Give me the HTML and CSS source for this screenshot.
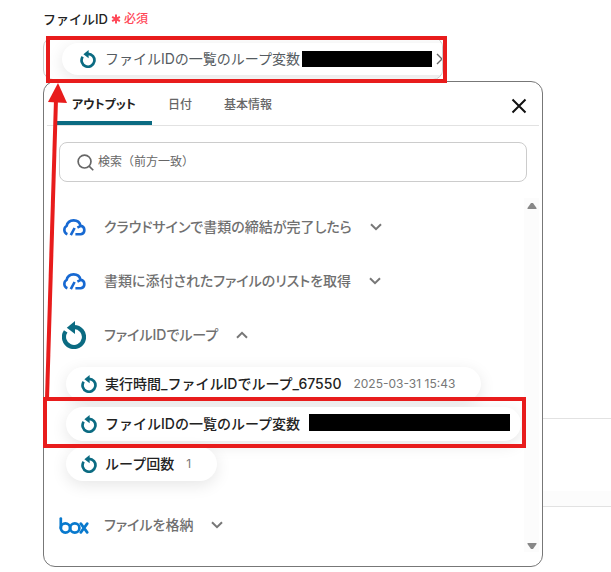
FILE: index.html
```html
<!DOCTYPE html>
<html lang="ja">
<head>
<meta charset="utf-8">
<meta name="viewport" content="width=device-width, initial-scale=1">
<title>ファイルID</title>
<link rel="stylesheet" href="styles.css">
</head>
<body>
<svg class="defs" aria-hidden="true">
  <symbol id="loop" viewBox="0 0 24 28">
    <path d="M3.7 10.4A10 10 0 1 0 12 6" fill="none" stroke="currentColor" stroke-width="4.2"/>
    <path d="M4.8 6.8 13 0v13z" fill="currentColor"/>
  </symbol>
  <symbol id="cloud" viewBox="0 0 24 18">
    <path d="M5.4 16.3A4.6 4.6 0 0 1 4.6 8 7.2 7.2 0 0 1 18.6 7.8 4.3 4.3 0 0 1 18.8 16.3H13.4" fill="none" stroke="currentColor" stroke-width="2.6"/>
    <path d="M8.8 17.2 12.6 10M15.4 9.6 18.8 7.9" fill="none" stroke="currentColor" stroke-width="2.6"/>
  </symbol>
  <symbol id="chevron" viewBox="0 0 12 8">
    <path d="M1 1.2 6 6.2 11 1.2" fill="none" stroke="currentColor" stroke-width="2"/>
  </symbol>
</svg>
<main class="page">
  <div class="field">
    <p class="label" id="file-label">ファイルID <span class="required"><svg class="star" viewBox="0 0 10 10"><path d="M5 .5v9M1.1 2.8l7.8 4.4M8.9 2.8 1.1 7.2"/></svg>必須</span></p>
    <div class="value" role="group" aria-labelledby="file-label">
      <div class="chip chip-value"><svg class="loop"><use href="#loop"/></svg><span class="name">ファイルIDの一覧のループ変数</span><span class="redacted"></span><svg class="more" viewBox="0 0 8 12"><path d="m1 1 5 5-5 5"/></svg></div>
    </div>

    <section class="panel">
      <header class="head">
        <div class="tabs" role="tablist">
          <button class="tab active" role="tab" aria-selected="true">アウトプット</button>
          <button class="tab" role="tab">日付</button>
          <button class="tab" role="tab">基本情報</button>
        </div>
        <button class="close" aria-label="閉じる"><svg viewBox="0 0 16 16"><path d="m1.5 1.5 13 13m0-13-13 13"/></svg></button>
      </header>
      <label class="search">
        <svg viewBox="0 0 18 18"><circle cx="8" cy="8" r="6.8"/><path d="m12.8 12.8 4.4 4.4"/></svg>
        <input type="text" placeholder="検索（前方一致）" aria-label="検索">
      </label>
      <div class="scroll">
        <div class="list">
          <button class="row"><span class="logo"><svg class="cloud"><use href="#cloud"/></svg></span>クラウドサインで書類の締結が完了したら<svg class="chevron"><use href="#chevron"/></svg></button>
          <button class="row"><span class="logo"><svg class="cloud"><use href="#cloud"/></svg></span>書類に添付されたファイルのリストを取得<svg class="chevron"><use href="#chevron"/></svg></button>
          <button class="row" aria-expanded="true"><span class="logo"><svg class="loop-large"><use href="#loop"/></svg></span>ファイルIDでループ<svg class="chevron open"><use href="#chevron"/></svg></button>
          <div class="chips">
            <button class="chip"><svg class="loop"><use href="#loop"/></svg><span>実行時間_ファイルIDでループ_67550</span><span class="sample">2025-03-31 15:43</span></button>
            <button class="chip"><svg class="loop"><use href="#loop"/></svg><span>ファイルIDの一覧のループ変数</span><span class="redacted wide"></span></button>
            <button class="chip"><svg class="loop"><use href="#loop"/></svg><span>ループ回数</span><span class="sample">1</span></button>
          </div>
          <button class="row"><span class="logo"><svg class="box" viewBox="0 0 30 17" role="img" aria-label="box"><path d="M1.8 1.5v9.5"/><circle cx="6.4" cy="11" r="4.6"/><circle cx="15.8" cy="11" r="4.6"/><path d="m21.8 6.6 6.4 8.8m0-8.8-6.4 8.8"/></svg></span>ファイルを格納<svg class="chevron"><use href="#chevron"/></svg></button>
        </div>
        <div class="bar" aria-hidden="true">
          <svg viewBox="0 0 10 8"><path d="M4 1 .5 6v1h9V6L6 1z"/></svg>
          <svg viewBox="0 0 10 8"><path d="M4 7 .5 2V1h9v1L6 7z"/></svg>
        </div>
      </div>
    </section>
    <div class="mark mark-value"></div>
    <div class="mark mark-item"></div>
    <svg class="arrow" viewBox="0 0 24 316" aria-hidden="true"><path d="M3 316 12 16" stroke="#e81c1c" stroke-width="4"/><path d="M14 0 23 20 4 19z" fill="#e81c1c"/></svg>
  </div>
  <div class="section"></div>
</main>
</body>
</html>
```
FILE: styles.css
```css
* { box-sizing: border-box; }
body {
  margin: 0;
  background: #fff;
  color: #222;
  font: 14px/20px Inter, "Noto Sans CJK JP", sans-serif;
}
button, input { font: inherit; color: inherit; border: 0; background: none; padding: 0; }
svg { flex: none; display: block; }
.defs { position: absolute; width: 0; height: 0; }
.page { min-height: 100vh; padding-bottom: 60px; overflow: hidden; }
.field { position: relative; height: 418px; padding: 9px 68px 0 43px; }
.label { display: flex; align-items: center; gap: 3px; margin: 0 0 8px; font-size: 13px; line-height: 20px; font-weight: 500; }
.required { display: flex; align-items: center; gap: 3px; color: #ff4757; font-size: 12px; }
.star { width: 10px; height: 10px; stroke: currentColor; stroke-width: 2; }
.value { width: 400px; max-width: 100%; height: 43px; padding: 5px 0 0 18px; overflow: hidden; border: 1px solid #ccc; border-radius: 10px; }
.chip {
  display: flex; align-items: center; gap: 8px; height: 34px; padding: 0 26px 0 15px;
  border-radius: 17px; background: #fff; font-weight: 500; white-space: nowrap;
  box-shadow: 0 4px 16px rgba(0, 0, 0, .1);
}
.chip-value { width: 420px; height: 32px; gap: 4px; padding-left: 18px; font-weight: 400; color: #555b61; }
.chip-value .name { margin: 0 -2px 0 5px; }
.loop { width: 16px; height: 18px; color: #0b6b82; }
.more { width: 8px; height: 12px; fill: none; stroke: #666; stroke-width: 1.4; }
.redacted { flex: none; width: 130px; height: 16px; background: #000; }
.redacted.wide { width: 201px; height: 17px; margin: 0 -15px 3px 1px; }
.panel { position: absolute; top: 81px; left: 43px; right: 68px; padding: 0 3px 14px; border: 1px solid #777; border-radius: 12px; background: #fff; }
.head { display: flex; justify-content: space-between; align-items: center; height: 44px; padding: 0 12px 0 9px; border-bottom: 1px solid #e2e2e2; }
.tabs { display: flex; align-self: stretch; font-feature-settings: "palt"; }
.tab { padding: 6px 16px 0; border-bottom: 4px solid transparent; font-size: 12px; font-weight: 500; font-feature-settings: inherit; color: #666; }
.tab.active { border-color: #0b6b82; font-weight: 700; color: #222; }
.close svg { width: 16px; height: 16px; margin-top: 4px; fill: none; stroke: #111; stroke-width: 2; }
.search { display: flex; align-items: center; gap: 4px; height: 40px; margin: 16px 12px; padding: 0 17px; border: 1px solid #ccc; border-radius: 8px; }
.search svg { width: 17px; height: 17px; fill: none; stroke: #666; stroke-width: 1.8; }
.search input { flex: 1; min-width: 0; outline: 0; font-size: 12px; }
.search input::placeholder { color: #666; opacity: 1; }
.scroll { display: flex; }
.list { flex: 1; min-width: 0; padding: 2px 0 0 12px; }
.row { display: flex; align-items: center; height: 54px; color: #707070; font-weight: 500; font-feature-settings: "palt"; }
.logo { display: flex; justify-content: center; width: 30px; margin-right: 15px; }
.cloud { width: 24px; height: 18px; color: #1769d2; }
.loop-large { width: 24px; height: 28px; color: #0b6b82; }
.box { width: 30px; height: 17px; fill: none; stroke: #0879cd; stroke-width: 2.7; stroke-linecap: round; }
.chevron { width: 12px; height: 8px; margin-left: 18px; color: #777; }
.chevron.open { transform: rotate(180deg); }
.chips { display: flex; flex-direction: column; align-items: flex-start; gap: 6px; padding: 5px 0 17px 7px; }
.sample { margin-left: 4px; font-size: 12px; font-weight: 400; color: #777; }
.bar { display: flex; flex-direction: column; justify-content: space-between; align-items: center; width: 15px; padding: 4px 0 2px; background: #fcfcfc; }
.bar svg { width: 10px; height: 8px; fill: #888; }
.mark { position: absolute; border: 4px solid #e81c1c; }
.mark-value { top: 36px; left: 46px; width: 401px; height: 47px; }
.mark-item { top: 397px; left: 43px; width: 483px; height: 51px; }
.arrow { position: absolute; top: 83px; left: 44px; width: 24px; height: 316px; }
.section { height: 89px; margin-left: 43px; border: solid #e2e2e2; border-width: 1px 0; background: linear-gradient(#fff 72px, #fcfcfc 72px); }
```
